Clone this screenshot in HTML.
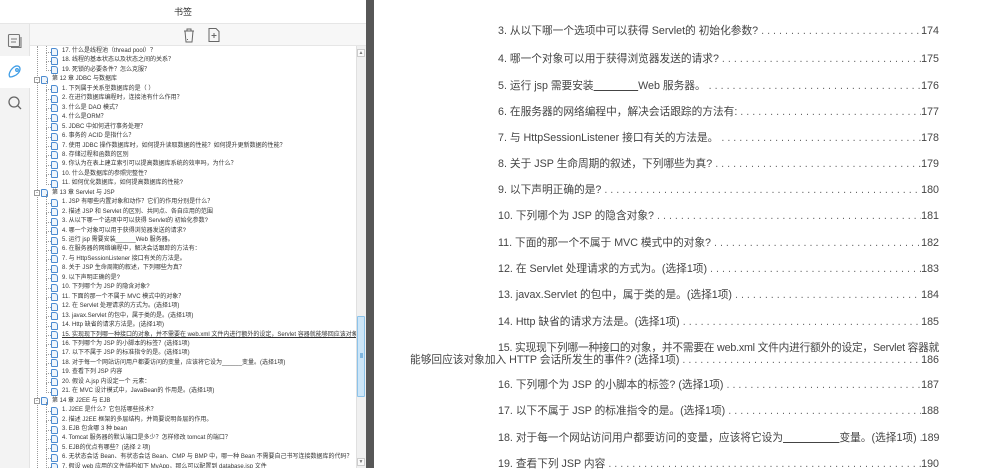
<!DOCTYPE html>
<html><head><meta charset="utf-8"><style>
*{margin:0;padding:0;box-sizing:border-box}
body{width:999px;height:468px;overflow:hidden;background:#fff;position:relative;font-family:"Liberation Sans","Noto Sans CJK SC",sans-serif}
#hdr{position:absolute;left:0;top:0;width:366px;height:24px;border-bottom:1px solid #e6e6e6;text-align:center;font-size:9px;line-height:24px;color:#333}
#side{position:absolute;left:0;top:24px;width:30px;height:444px;background:#f3f3f3;border-right:1px solid #e4e4e4}
#tab{position:absolute;left:0;top:32px;width:30px;height:32px;background:#fff}
#tb{position:absolute;left:30px;top:24px;width:336px;height:22px;background:#f7f7f7;border-bottom:1px solid #e6e6e6}
#list{position:absolute;left:31px;top:46px;width:325px;height:422px;overflow:hidden}
.r{position:absolute;height:9px;font-size:6px;line-height:9px;color:#333;white-space:nowrap}
.ic{position:absolute;width:7px;height:8px;border:1px solid #4a8ad0;border-radius:1px 3px 1px 1px;background:#eef5fc}
.dl{position:absolute;border-left:1px dotted #999}
.hl{position:absolute;border-top:1px dotted #999;width:5px}
.pm{position:absolute;width:6px;height:6px;border:1px solid #999;font-size:6px;line-height:4px;text-align:center;color:#555;background:#fff}
#sb{position:absolute;left:356px;top:46px;width:10px;height:422px;background:#f0f0f0;border-left:1px solid #e0e0e0}
#thumb{position:absolute;left:357px;top:316px;width:8px;height:81px;background:#cde6f8;border:1px solid #8cc3ea;border-radius:1px}
#dark{position:absolute;left:366px;top:0;width:8px;height:468px;background:#575757}
.e{position:absolute;left:498px;width:441px;display:flex;font-size:10.7px;line-height:16px;color:#444;white-space:nowrap}
.e .t{flex:none}
.e .d{flex:1;overflow:hidden;letter-spacing:3px;color:#666;padding:0 2px 0 3px}
.e .n{flex:none}
</style></head><body>
<div id="hdr">书签</div>
<div id="side"><div id="tab"></div>
<svg style="position:absolute;left:7px;top:9px" width="16" height="16" viewBox="0 0 16 16" fill="none" stroke="#777" stroke-width="1.1"><rect x="1.5" y="1.5" width="11" height="12" rx="1"/><path d="M14 4v10.5H4"/><path d="M4 6h6M4 9h5"/></svg>
<svg style="position:absolute;left:7px;top:40px" width="16" height="16" viewBox="0 0 16 16" fill="none" stroke="#3f9de6" stroke-width="1.3"><path d="M3 13C1 11 3 6 7 3c3-2 6-1 6 2s-3 6-6 7c-2 1-3 1-4 1z"/><circle cx="10" cy="6" r="1.3"/></svg>
<svg style="position:absolute;left:7px;top:71px" width="16" height="16" viewBox="0 0 16 16" fill="none" stroke="#666" stroke-width="1.3"><circle cx="7" cy="7" r="5"/><path d="M10.6 10.6L14 14"/></svg>
</div>
<div id="tb">
<svg style="position:absolute;left:152px;top:3px" width="14" height="16" viewBox="0 0 14 16" fill="none" stroke="#666" stroke-width="1"><path d="M2 4h10M5 4V2h4v2M3 4l1 11h6l1-11"/><path d="M5.5 13v-1"/></svg>
<svg style="position:absolute;left:177px;top:3px" width="14" height="16" viewBox="0 0 14 16" fill="none" stroke="#666" stroke-width="1"><path d="M2 1.5h7l3 3v10H2z"/><path d="M7 6v5M4.5 8.5h5"/></svg>
</div>
<div id="list"></div>
<div id="sb"><div style="position:absolute;left:0;top:3px;width:8px;height:8px;border:1px solid #ccc;background:#fafafa;font-size:5px;text-align:center;line-height:6px;color:#777">▲</div><div style="position:absolute;left:0;bottom:2px;width:8px;height:8px;border:1px solid #ccc;background:#fafafa;font-size:5px;text-align:center;line-height:6px;color:#777">▼</div></div>
<div id="thumb"><div style="position:absolute;left:2px;top:36px;width:3px;height:5px;background:#7fb6e0"></div></div>
<div id="dark"></div>
<div id="right"></div>
<script>
var rows=[
[0,"17. 什么是线程池（thread pool）？"],[0,"18. 线程的基本状态以及状态之间的关系？"],[0,"19. 死锁的必要条件？怎么克服？"],
[1,"第 12 章 JDBC 与数据库"],
[0,"1. 下列属于关系型数据库的是（ ）"],[0,"2. 在进行数据库编程时，连接池有什么作用？"],[0,"3. 什么是 DAO 模式？"],[0,"4. 什么是ORM？"],[0,"5. JDBC 中如何进行事务处理？"],[0,"6. 事务的 ACID 是指什么？"],[0,"7. 使用 JDBC 操作数据库时，如何提升读取数据的性能？如何提升更新数据的性能？"],[0,"8. 存储过程和函数的区别"],[0,"9. 你认为在表上建立索引可以提高数据库系统的效率吗，为什么？"],[0,"10. 什么是数据库的参照完整性？"],[0,"11. 如何优化数据库，如何提高数据库的性能?"],
[1,"第 13 章 Servlet 与 JSP"],
[0,"1. JSP 有哪些内置对象和动作？它们的作用分别是什么？"],[0,"2. 描述 JSP 和 Servlet 的区别、共同点、各自应用的范围"],[0,"3. 从以下哪一个选项中可以获得 Servlet的 初始化参数?"],[0,"4. 哪一个对象可以用于获得浏览器发送的请求?"],[0,"5. 运行 jsp 需要安装______Web 服务器。"],[0,"6. 在服务器的网络编程中，解决会话跟踪的方法有："],[0,"7. 与 HttpSessionListener 接口有关的方法是。"],[0,"8. 关于 JSP 生命周期的叙述，下列哪些为真？"],[0,"9. 以下声明正确的是?"],[0,"10. 下列哪个为 JSP 的隐含对象?"],[0,"11. 下面的那一个不属于 MVC 模式中的对象？"],[0,"12. 在 Servlet 处理请求的方式为。(选择1项)"],[0,"13. javax.Servlet 的包中，属于类的是。(选择1项)"],[0,"14. Http 缺省的请求方法是。(选择1项)"],[2,"15. 实现现下列哪一种接口的对象，并不需要在 web.xml 文件内进行额外的设定，Servlet 容器就能够回应该对象加入"],[0,"16. 下列哪个为 JSP 的小脚本的标签？(选择1项)"],[0,"17. 以下不属于 JSP 的标准指令的是。(选择1项)"],[0,"18. 对于每一个网站访问用户都要访问的变量，应该将它设为______变量。(选择1项)"],[0,"19. 查看下列 JSP 内容"],[0,"20. 假设 A.jsp 内设定一个<jsp:useBean> 元素："],[0,"21. 在 MVC 设计模式中，JavaBean的 作用是。(选择1项)"],
[1,"第 14 章 J2EE 与 EJB"],
[0,"1. J2EE 是什么？它包括哪些技术？"],[0,"2. 描述 J2EE 框架的多层结构，并简要说明各层的作用。"],[0,"3. EJB 包含哪 3 种 bean"],[0,"4. Tomcat 服务器的默认端口是多少？怎样修改 tomcat 的端口？"],[0,"5. EJB的优点有哪些？(选择 2 项)"],[0,"6. 无状态会话 Bean、有状态会话 Bean、CMP 与 BMP 中，哪一种 Bean 不需要自己书写连接数据库的代码？"],[0,"7. 假设 web 应用的文件结构如下 MyApp，那么可以配置到 database.jsp 文件"]];
var h="";
h+='<div class="dl" style="left:6px;top:0;height:422px"></div>';
rows.forEach(function(r,i){var y=1+i*9.45;
 if(r[0]==1){h+='<div class="pm" style="left:3px;top:'+(y+1.5)+'px">-</div><div class="ic" style="left:10px;top:'+(y+0.5)+'px"></div><div class="r" style="left:21px;top:'+y+'px">'+r[1]+'</div>';}
 else{h+='<div class="dl" style="left:15px;top:'+(y-4)+'px;height:9.5px"></div><div class="hl" style="left:15px;top:'+(y+4.5)+'px"></div><div class="ic" style="left:20px;top:'+(y+0.5)+'px"></div><div class="r" style="left:31px;top:'+y+'px;'+(r[0]==2?'text-decoration:underline;':'')+'">'+r[1]+'</div>';}
});
document.getElementById("list").innerHTML=h;
var U=function(n){return '<u>'+new Array(n).join('&nbsp;')+'</u>';};
var ents=[[23,"3. 从以下哪一个选项中可以获得 Servlet的 初始化参数?","174"],[51,"4. 哪一个对象可以用于获得浏览器发送的请求?","175"],[78,"5. 运行 jsp 需要安装"+U(16)+"Web 服务器。","176"],[104,"6. 在服务器的网络编程中，解决会话跟踪的方法有:","177"],[130,"7. 与 HttpSessionListener 接口有关的方法是。","178"],[156,"8. 关于 JSP 生命周期的叙述，下列哪些为真?","179"],[182,"9. 以下声明正确的是?","180"],[208,"10. 下列哪个为 JSP 的隐含对象?","181"],[235,"11. 下面的那一个不属于 MVC 模式中的对象?","182"],[261,"12. 在 Servlet 处理请求的方式为。(选择1项)","183"],[287,"13. javax.Servlet 的包中，属于类的是。(选择1项)","184"],[314,"14. Http 缺省的请求方法是。(选择1项)","185"],[352,"能够回应该对象加入 HTTP 会话所发生的事件? (选择1项)","186"],[377,"16. 下列哪个为 JSP 的小脚本的标签? (选择1项)","187"],[403,"17. 以下不属于 JSP 的标准指令的是。(选择1项)","188"],[430,"18. 对于每一个网站访问用户都要访问的变量，应该将它设为"+U(20)+"变量。(选择1项)","189"],[456,"19. 查看下列 JSP 内容","190"]];
var dots=new Array(200).join(".");var g="";
ents.forEach(function(e){var st=e[0]==352?'left:410px;width:529px;':'';g+='<div class="e" style="top:'+e[0]+'px;'+st+'"><span class="t">'+e[1]+'</span><span class="d">'+dots+'</span><span class="n">'+e[2]+'</span></div>';});
g+='<div class="e" style="top:340px;letter-spacing:-0.2px"><span class="t">15. 实现现下列哪一种接口的对象，并不需要在 web.xml 文件内进行额外的设定，Servlet 容器就</span></div>';
document.getElementById("right").innerHTML=g;
</script>
</body></html>
